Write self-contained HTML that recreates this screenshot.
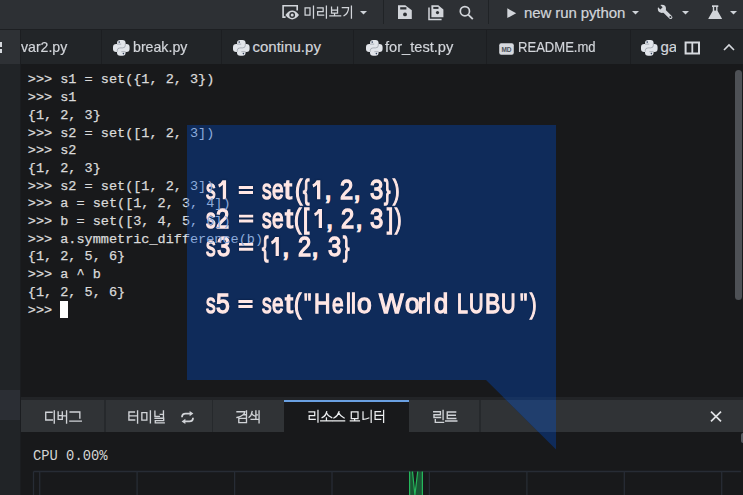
<!DOCTYPE html><html><head><meta charset="utf-8"><style>html,body{margin:0;padding:0;}body{width:743px;height:495px;overflow:hidden;position:relative;background:#18191b;font-family:"Liberation Sans",sans-serif}.big div{position:absolute;white-space:pre;transform-origin:0 0}</style></head><body><div style="position:absolute;left:0;top:0;width:743px;height:29px;background:#2d3034"></div>
<div style="position:absolute;left:0;top:29px;width:743px;height:1px;background:#1d1f22"></div>
<svg style="position:absolute;left:281px;top:4px" width="20" height="17" viewBox="0 0 20 17"><path d="M4.6 13.1H2.1V1.8H16.2V6.6" fill="none" stroke="#d2d5da" stroke-width="1.6"/><path d="M4.4 11Q11.2 2.2 18 11Q11.2 19.8 4.4 11Z" fill="#d2d5da"/><circle cx="11.2" cy="11" r="2.9" fill="#2d3034"/><circle cx="11.2" cy="11" r="1.5" fill="#d2d5da"/></svg>
<svg style="position:absolute;left:0;top:0" width="743" height="30"><g fill="none" stroke="#d2d5da" stroke-width="1.25" stroke-linecap="square" stroke-linejoin="miter"><path transform="translate(304.00 6.60) scale(0.1200)" d="M9 11H50V72H9Z M79 -3V95" vector-effect="non-scaling-stroke"/><path transform="translate(316.45 6.60) scale(0.1200)" d="M8 10H56V41H10V72H60 M83 -3V95" vector-effect="non-scaling-stroke"/><path transform="translate(328.90 6.60) scale(0.1200)" d="M22 5V54H72V5 M22 29H72 M47 54V76 M8 78H98" vector-effect="non-scaling-stroke"/><path transform="translate(341.35 6.60) scale(0.1200)" d="M8 9H60Q60 52 22 76 M84 -3V95" vector-effect="non-scaling-stroke"/></g></svg>
<svg style="position:absolute;left:360px;top:11px" width="7" height="3.6" viewBox="0 0 7 3.6"><path d="M0 0H7L3.5 3.6Z" fill="#cfd3d8"/></svg>
<div style="position:absolute;left:383px;top:0;width:1px;height:24px;background:#202326"></div>
<svg style="position:absolute;left:397px;top:5px" width="16" height="15" viewBox="0 0 16 15"><path d="M1 0.3H8.3L14.8 5.2V14H1Z" fill="#d2d5da"/><rect x="3.2" y="2.2" width="6.2" height="2.3" fill="#2d3034"/><circle cx="8" cy="9.4" r="1.9" fill="#2d3034"/></svg>
<svg style="position:absolute;left:428px;top:5px" width="17" height="16" viewBox="0 0 17 16"><path d="M1 2.6V14.4H13.6" fill="none" stroke="#d2d5da" stroke-width="1.5"/><path d="M3.4 0.3H10.3L15.4 4.4V12.2H3.4Z" fill="#d2d5da"/><rect x="5.3" y="1.9" width="5.2" height="2" fill="#2d3034"/><circle cx="9.5" cy="7.6" r="1.6" fill="#2d3034"/></svg>
<svg style="position:absolute;left:458px;top:5px" width="17" height="15" viewBox="0 0 17 15"><circle cx="6.9" cy="6.2" r="4.6" fill="none" stroke="#d2d5da" stroke-width="1.7"/><path d="M10.2 9.6L14.8 14.1" stroke="#d2d5da" stroke-width="1.9"/></svg>
<div style="position:absolute;left:488px;top:0;width:1px;height:24px;background:#202326"></div>
<svg style="position:absolute;left:507px;top:7.5px" width="10" height="11" viewBox="0 0 10 11"><path d="M0.3 0.3L9.2 5.2L0.3 10.1Z" fill="#d2d5da"/></svg>
<div style="position:absolute;left:524px;top:2px;font:15px/22px 'Liberation Sans',sans-serif;color:#d2d5da;-webkit-text-stroke:0.2px #d2d5da;white-space:nowrap;letter-spacing:-0.1px">new run python</div>
<svg style="position:absolute;left:632px;top:11px" width="7" height="3.6" viewBox="0 0 7 3.6"><path d="M0 0H7L3.5 3.6Z" fill="#cfd3d8"/></svg>
<svg style="position:absolute;left:656px;top:3px" width="18" height="18" viewBox="0 0 18 18"><circle cx="5.9" cy="5.8" r="4.1" fill="#d2d5da"/><path d="M5.9 5.8L14.6 14.2" stroke="#d2d5da" stroke-width="3.6" stroke-linecap="round"/><path d="M6.6 4.3L2.8 0.5L0.6 2.7L4.4 6.5Z" fill="#2d3034"/><circle cx="14.4" cy="14" r="1.05" fill="#2d3034"/></svg>
<svg style="position:absolute;left:681.5px;top:11px" width="7" height="3.6" viewBox="0 0 7 3.6"><path d="M0 0H7L3.5 3.6Z" fill="#cfd3d8"/></svg>
<svg style="position:absolute;left:707px;top:4px" width="16" height="16" viewBox="0 0 16 16"><rect x="5" y="1.3" width="6.3" height="1.7" fill="#d2d5da"/><path d="M5.8 2.9H10.5V6.8L14.9 14.4Q15.2 15 14.5 15H1.8Q1.1 15 1.4 14.4L5.8 6.8Z" fill="#d2d5da"/><path d="M7.2 2.9H9.1V6.6H7.2Z" fill="#2d3034"/></svg>
<svg style="position:absolute;left:730px;top:11px" width="7" height="3.6" viewBox="0 0 7 3.6"><path d="M0 0H7L3.5 3.6Z" fill="#cfd3d8"/></svg>
<div style="position:absolute;left:0;top:30px;width:743px;height:34px;background:#222528"></div>
<div style="position:absolute;left:0;top:30px;width:20px;height:34px;background:#2e3135"></div>
<div style="position:absolute;left:0;top:42px;width:2px;height:5.2px;background:#d6d9de"></div>
<div style="position:absolute;left:0;top:49px;width:1.8px;height:3.7px;background:#d6d9de"></div>
<div style="position:absolute;left:20px;top:30px;width:1px;height:34px;background:#1c1e21"></div>
<div style="position:absolute;left:101px;top:30px;width:1px;height:34px;background:#1c1e21"></div>
<div style="position:absolute;left:221px;top:30px;width:1px;height:34px;background:#1c1e21"></div>
<div style="position:absolute;left:353px;top:30px;width:1px;height:34px;background:#1c1e21"></div>
<div style="position:absolute;left:486px;top:30px;width:1px;height:34px;background:#1c1e21"></div>
<div style="position:absolute;left:630px;top:30px;width:1px;height:34px;background:#1c1e21"></div>
<div style="position:absolute;left:21.3px;top:36px;font:15px/22px 'Liberation Sans',sans-serif;color:#d2d5da;-webkit-text-stroke:0.2px #d2d5da;white-space:nowrap;letter-spacing:0px;transform-origin:0 0;transform:scaleX(0.94)">var2.py</div>
<svg width="17" height="17" viewBox="0 0 17 17" style="position:absolute;left:113px;top:39.5px"><rect x="4" y="0" width="8.6" height="15.8" rx="3.2" fill="#e2e5ea"/><rect x="0" y="3.9" width="16.6" height="8" rx="3.2" fill="#e2e5ea"/><path d="M4.3 11.8V10.4Q4.3 7.9 7 7.9H9.6Q12.3 7.9 12.3 5.4V3.9M4 4.1H8.2M8.4 11.7H12.6" fill="none" stroke="#7d848e" stroke-width="0.55"/><circle cx="6.2" cy="2.1" r="0.8" fill="#34445e"/><circle cx="10.4" cy="13.6" r="0.8" fill="#34445e"/></svg>
<div style="position:absolute;left:133px;top:36px;font:15px/22px 'Liberation Sans',sans-serif;color:#d2d5da;-webkit-text-stroke:0.2px #d2d5da;white-space:nowrap;letter-spacing:0px;transform-origin:0 0;transform:scaleX(0.945)">break.py</div>
<svg width="17" height="17" viewBox="0 0 17 17" style="position:absolute;left:232.5px;top:39.5px"><rect x="4" y="0" width="8.6" height="15.8" rx="3.2" fill="#e2e5ea"/><rect x="0" y="3.9" width="16.6" height="8" rx="3.2" fill="#e2e5ea"/><path d="M4.3 11.8V10.4Q4.3 7.9 7 7.9H9.6Q12.3 7.9 12.3 5.4V3.9M4 4.1H8.2M8.4 11.7H12.6" fill="none" stroke="#7d848e" stroke-width="0.55"/><circle cx="6.2" cy="2.1" r="0.8" fill="#34445e"/><circle cx="10.4" cy="13.6" r="0.8" fill="#34445e"/></svg>
<div style="position:absolute;left:252.5px;top:36px;font:15px/22px 'Liberation Sans',sans-serif;color:#d2d5da;-webkit-text-stroke:0.2px #d2d5da;white-space:nowrap;letter-spacing:0px;transform-origin:0 0;transform:scaleX(1.0)">continu.py</div>
<svg width="17" height="17" viewBox="0 0 17 17" style="position:absolute;left:365.5px;top:39.5px"><rect x="4" y="0" width="8.6" height="15.8" rx="3.2" fill="#e2e5ea"/><rect x="0" y="3.9" width="16.6" height="8" rx="3.2" fill="#e2e5ea"/><path d="M4.3 11.8V10.4Q4.3 7.9 7 7.9H9.6Q12.3 7.9 12.3 5.4V3.9M4 4.1H8.2M8.4 11.7H12.6" fill="none" stroke="#7d848e" stroke-width="0.55"/><circle cx="6.2" cy="2.1" r="0.8" fill="#34445e"/><circle cx="10.4" cy="13.6" r="0.8" fill="#34445e"/></svg>
<div style="position:absolute;left:385px;top:36px;font:15px/22px 'Liberation Sans',sans-serif;color:#d2d5da;-webkit-text-stroke:0.2px #d2d5da;white-space:nowrap;letter-spacing:0px;transform-origin:0 0;transform:scaleX(0.975)">for_test.py</div>
<svg style="position:absolute;left:499px;top:42.5px" width="15" height="12" viewBox="0 0 15 12"><rect x="0.2" y="0.2" width="14.6" height="11.6" rx="2" fill="#d6d9de"/><text x="7.5" y="8.6" font-family="Liberation Sans" font-size="6.5" font-weight="bold" text-anchor="middle" fill="#4a5058">MD</text></svg>
<div style="position:absolute;left:518px;top:36px;font:15px/22px 'Liberation Sans',sans-serif;color:#d2d5da;-webkit-text-stroke:0.2px #d2d5da;white-space:nowrap;letter-spacing:0px;transform-origin:0 0;transform:scaleX(0.87)">README.md</div>
<svg width="17" height="17" viewBox="0 0 17 17" style="position:absolute;left:641px;top:39.5px"><rect x="4" y="0" width="8.6" height="15.8" rx="3.2" fill="#e2e5ea"/><rect x="0" y="3.9" width="16.6" height="8" rx="3.2" fill="#e2e5ea"/><path d="M4.3 11.8V10.4Q4.3 7.9 7 7.9H9.6Q12.3 7.9 12.3 5.4V3.9M4 4.1H8.2M8.4 11.7H12.6" fill="none" stroke="#7d848e" stroke-width="0.55"/><circle cx="6.2" cy="2.1" r="0.8" fill="#34445e"/><circle cx="10.4" cy="13.6" r="0.8" fill="#34445e"/></svg>
<div style="position:absolute;left:660.5px;top:36px;font:15px/22px 'Liberation Sans',sans-serif;color:#d2d5da;-webkit-text-stroke:0.2px #d2d5da;white-space:nowrap;letter-spacing:0px;transform-origin:0 0;transform:scaleX(1.0)">ga</div>
<div style="position:absolute;left:676px;top:30px;width:67px;height:33px;background:#222528"></div>
<svg style="position:absolute;left:684px;top:40.5px" width="17" height="14" viewBox="0 0 17 14"><rect x="1.6" y="1.5" width="13.4" height="11" fill="none" stroke="#d6d9de" stroke-width="2"/><path d="M8.3 1.5V12.5" stroke="#d6d9de" stroke-width="1.8"/></svg>
<svg style="position:absolute;left:723px;top:43px" width="12" height="8" viewBox="0 0 12 8"><path d="M1 7L6 2L11 7" fill="none" stroke="#d6d9de" stroke-width="1.6"/></svg>
<div style="position:absolute;left:0;top:64px;width:20px;height:431px;background:#212427"></div>
<div style="position:absolute;left:0;top:390px;width:20px;height:30px;background:#2b2e34"></div>
<div style="position:absolute;left:20px;top:64px;width:1px;height:431px;background:#1b1d20"></div>
<div style="position:absolute;left:21px;top:64px;width:722px;height:333px;background:#18191b"></div>
<div style="position:absolute;left:27.8px;top:71.40px;height:18px;font:13.53px/18px 'Liberation Mono',monospace;color:#dadada;-webkit-text-stroke:0.25px currentColor;white-space:pre">&gt;&gt;&gt; s1 = set({1, 2, 3})</div><div style="position:absolute;left:27.8px;top:89.10px;height:18px;font:13.53px/18px 'Liberation Mono',monospace;color:#dadada;-webkit-text-stroke:0.25px currentColor;white-space:pre">&gt;&gt;&gt; s1</div><div style="position:absolute;left:27.8px;top:106.80px;height:18px;font:13.53px/18px 'Liberation Mono',monospace;color:#dadada;-webkit-text-stroke:0.25px currentColor;white-space:pre">{1, 2, 3}</div><div style="position:absolute;left:27.8px;top:124.50px;height:18px;font:13.53px/18px 'Liberation Mono',monospace;color:#dadada;-webkit-text-stroke:0.25px currentColor;white-space:pre">&gt;&gt;&gt; s2 = set([1, 2, 3])</div><div style="position:absolute;left:27.8px;top:142.20px;height:18px;font:13.53px/18px 'Liberation Mono',monospace;color:#dadada;-webkit-text-stroke:0.25px currentColor;white-space:pre">&gt;&gt;&gt; s2</div><div style="position:absolute;left:27.8px;top:159.90px;height:18px;font:13.53px/18px 'Liberation Mono',monospace;color:#dadada;-webkit-text-stroke:0.25px currentColor;white-space:pre">{1, 2, 3}</div><div style="position:absolute;left:27.8px;top:177.60px;height:18px;font:13.53px/18px 'Liberation Mono',monospace;color:#dadada;-webkit-text-stroke:0.25px currentColor;white-space:pre">&gt;&gt;&gt; s2 = set([1, 2, 3])</div><div style="position:absolute;left:27.8px;top:195.30px;height:18px;font:13.53px/18px 'Liberation Mono',monospace;color:#dadada;-webkit-text-stroke:0.25px currentColor;white-space:pre">&gt;&gt;&gt; a = set([1, 2, 3, 4])</div><div style="position:absolute;left:27.8px;top:213.00px;height:18px;font:13.53px/18px 'Liberation Mono',monospace;color:#dadada;-webkit-text-stroke:0.25px currentColor;white-space:pre">&gt;&gt;&gt; b = set([3, 4, 5, 6])</div><div style="position:absolute;left:27.8px;top:230.70px;height:18px;font:13.53px/18px 'Liberation Mono',monospace;color:#dadada;-webkit-text-stroke:0.25px currentColor;white-space:pre">&gt;&gt;&gt; a.symmetric_difference(b)</div><div style="position:absolute;left:27.8px;top:248.40px;height:18px;font:13.53px/18px 'Liberation Mono',monospace;color:#dadada;-webkit-text-stroke:0.25px currentColor;white-space:pre">{1, 2, 5, 6}</div><div style="position:absolute;left:27.8px;top:266.10px;height:18px;font:13.53px/18px 'Liberation Mono',monospace;color:#dadada;-webkit-text-stroke:0.25px currentColor;white-space:pre">&gt;&gt;&gt; a ^ b</div><div style="position:absolute;left:27.8px;top:283.80px;height:18px;font:13.53px/18px 'Liberation Mono',monospace;color:#dadada;-webkit-text-stroke:0.25px currentColor;white-space:pre">{1, 2, 5, 6}</div><div style="position:absolute;left:27.8px;top:301.50px;height:18px;font:13.53px/18px 'Liberation Mono',monospace;color:#dadada;-webkit-text-stroke:0.25px currentColor;white-space:pre">&gt;&gt;&gt; </div>
<div style="position:absolute;left:60px;top:301px;width:8px;height:17px;background:#ffffff"></div>
<div style="position:absolute;left:735px;top:70px;width:7px;height:229.5px;border-radius:3.5px;background:#4e5156"></div>
<div style="position:absolute;left:21px;top:397px;width:722px;height:3px;background:#222427"></div>
<div style="position:absolute;left:21px;top:400px;width:722px;height:32px;background:#303336"></div>
<div style="position:absolute;left:104px;top:400px;width:1.5px;height:32px;background:#26292c"></div>
<div style="position:absolute;left:211.6px;top:400px;width:1.5px;height:32px;background:#26292c"></div>
<div style="position:absolute;left:479.3px;top:400px;width:1.5px;height:32px;background:#26292c"></div>
<div style="position:absolute;left:284px;top:400px;width:125.3px;height:32px;background:#18191b"></div>
<div style="position:absolute;left:284px;top:400px;width:125.3px;height:2px;background:#6aa0e2"></div>
<svg style="position:absolute;left:0;top:0" width="743" height="495"><g fill="none" stroke="#d0d3d7" stroke-width="1.35" stroke-linecap="square" stroke-linejoin="miter"><path transform="translate(45.00 411.30) scale(0.1220)" d="M58 8H6V71H60 M76 -3V96" vector-effect="non-scaling-stroke"/><path transform="translate(57.30 411.30) scale(0.1220)" d="M7 6V66H41V6 M7 36H41 M76 -3V96 M45 38H76" vector-effect="non-scaling-stroke"/><path transform="translate(69.60 411.30) scale(0.1220)" d="M4 6H84V56 M2 80H96" vector-effect="non-scaling-stroke"/></g><g fill="none" stroke="#d0d3d7" stroke-width="1.35" stroke-linecap="square" stroke-linejoin="miter"><path transform="translate(128.30 411.30) scale(0.1220)" d="M50 6H5V71H52 M5 38H48 M76 -3V96 M52 38H76" vector-effect="non-scaling-stroke"/><path transform="translate(140.75 411.30) scale(0.1220)" d="M9 11H50V72H9Z M79 -3V95" vector-effect="non-scaling-stroke"/><path transform="translate(153.20 411.30) scale(0.1220)" d="M14 0V42H50 M84 -3V57 M58 25H84 M15 57H86V76H17V95H90" vector-effect="non-scaling-stroke"/></g><g fill="none" stroke="#d0d3d7" stroke-width="1.35" stroke-linecap="square" stroke-linejoin="miter"><path transform="translate(236.00 411.30) scale(0.1220)" d="M8 4H72Q70 36 8 51 M86 -3V59 M68 28H86 M23 58H86V93H23Z" vector-effect="non-scaling-stroke"/><path transform="translate(248.45 411.30) scale(0.1220)" d="M30 2Q24 36 5 49 M30 24Q38 36 50 38 M61 -3V61 M61 29H73 M87 -3V61 M22 66H87V94" vector-effect="non-scaling-stroke"/></g><g fill="none" stroke="#eceef0" stroke-width="1.25" stroke-linecap="square" stroke-linejoin="miter"><path transform="translate(308.00 410.80) scale(0.1200)" d="M8 10H56V41H10V72H60 M83 -3V95" vector-effect="non-scaling-stroke"/><path transform="translate(320.20 410.80) scale(0.1200)" d="M54 8Q46 44 16 57 M54 20Q64 44 96 57 M52 60V78 M4 85H100" vector-effect="non-scaling-stroke"/><path transform="translate(332.40 410.80) scale(0.1200)" d="M55 8Q45 44 12 60 M55 20Q65 44 98 60 M6 85H102" vector-effect="non-scaling-stroke"/><path transform="translate(350.09 410.80) scale(0.1200)" d="M10 8H66V66H10Z M38 66V82 M2 84H78" vector-effect="non-scaling-stroke"/><path transform="translate(362.29 410.80) scale(0.1200)" d="M6 8V72Q30 70 54 60 M74 -3V96" vector-effect="non-scaling-stroke"/><path transform="translate(374.49 410.80) scale(0.1200)" d="M50 6H5V71H52 M5 38H48 M76 -3V96 M52 38H76" vector-effect="non-scaling-stroke"/></g><g fill="none" stroke="#d0d3d7" stroke-width="1.35" stroke-linecap="square" stroke-linejoin="miter"><path transform="translate(433.00 410.80) scale(0.1200)" d="M6 8H62V33H8V56H63 M84 -3V73 M19 73V97H88" vector-effect="non-scaling-stroke"/><path transform="translate(445.20 410.80) scale(0.1200)" d="M87 10H17V64H88 M17 37H84 M4 85H97" vector-effect="non-scaling-stroke"/></g></svg>
<svg style="position:absolute;left:180px;top:411px" width="15" height="13" viewBox="0 0 15 13"><path d="M2 6.2Q2 2.6 5.6 2.6H10.8" fill="none" stroke="#d0d3d7" stroke-width="1.8"/><path d="M9.6 0L13.4 2.6L9.6 5.2Z" fill="#d0d3d7"/><path d="M13 6.8Q13 10.4 9.4 10.4H4.2" fill="none" stroke="#d0d3d7" stroke-width="1.8"/><path d="M5.4 7.8L1.6 10.4L5.4 13Z" fill="#d0d3d7"/></svg>
<svg style="position:absolute;left:709.5px;top:410.5px" width="12" height="11" viewBox="0 0 12 11"><path d="M1 0.6L11 10.4M11 0.6L1 10.4" stroke="#e0e2e5" stroke-width="1.7"/></svg>
<div style="position:absolute;left:21px;top:432px;width:722px;height:63px;background:#18191b"></div>
<div style="position:absolute;left:33px;top:448px;font:13.8px/18px 'Liberation Mono',monospace;color:#d4d4d4;white-space:pre">CPU 0.00%</div>
<div style="position:absolute;left:741px;top:433px;width:4px;height:10px;border-radius:2px;background:#555a60"></div>
<svg style="position:absolute;left:0;top:0" width="743" height="495"><path d="M33.5 471.5H741" stroke="#272c35" stroke-width="1.3"/><path d="M33.5 471.5V495" stroke="#272c35" stroke-width="1.3"/><path d="M39.7 471.5V495" stroke="#272c35" stroke-width="1.3"/><path d="M137.1 471.5V495" stroke="#272c35" stroke-width="1.3"/><path d="M234.6 471.5V495" stroke="#272c35" stroke-width="1.3"/><path d="M332.0 471.5V495" stroke="#272c35" stroke-width="1.3"/><path d="M429.4 471.5V495" stroke="#272c35" stroke-width="1.3"/><path d="M526.9 471.5V495" stroke="#272c35" stroke-width="1.3"/><path d="M624.3 471.5V495" stroke="#272c35" stroke-width="1.3"/><path d="M721.7 471.5V495" stroke="#272c35" stroke-width="1.3"/><path d="M409.5 495V471.5H412.5L414.9 495L417.7 471.5H422.4V495Z" fill="#1b5534"/><path d="M409.6 471.5V495M412.5 471.5L414.9 495L417.7 471.5M422.4 471.5V495" stroke="#25b75c" stroke-width="1.2" fill="none"/></svg>
<div style="position:absolute;left:0;top:0;width:743px;height:495px;clip-path:polygon(187px 125px, 556px 125px, 556px 449.5px, 486px 380px, 187px 380px);background:#0f2b5a"></div>
<div style="position:absolute;left:0;top:0;width:743px;height:495px;clip-path:polygon(187px 125px, 556px 125px, 556px 449.5px, 486px 380px, 187px 380px)"><div style="position:absolute;left:21px;top:397px;width:722px;height:3px;background:#16325f"></div><div style="position:absolute;left:21px;top:400px;width:722px;height:32px;background:#203e6d"></div></div>
<svg style="position:absolute;left:0;top:0" width="743" height="495"><path fill="#ffe7e5" style="filter:drop-shadow(0 0 1.2px #061838)" d="M222.50 180.20H226.10V199.20H222.80V184.80Q221.40 186.40 219.10 187.60L218.20 184.60Q220.80 183.40 222.50 180.20Z M238.80 186.00H253.00V188.90H238.80Z M238.80 190.90H253.00V193.90H238.80Z M316.70 180.20H320.30V199.20H317.00V184.80Q315.60 186.40 313.30 187.60L312.40 184.60Q315.00 183.40 316.70 180.20Z M239.00 214.70H253.20V217.60H239.00Z M239.00 219.60H253.20V222.60H239.00Z M318.40 208.90H322.00V227.90H318.70V213.50Q317.30 215.10 315.00 216.30L314.10 213.30Q316.70 212.10 318.40 208.90Z M239.00 242.90H253.20V245.80H239.00Z M239.00 247.80H253.20V250.80H239.00Z M275.30 237.10H278.90V256.10H275.60V241.70Q274.20 243.30 271.90 244.50L271.00 241.50Q273.60 240.30 275.30 237.10Z M238.40 300.10H252.60V303.00H238.40Z M238.40 305.00H252.60V308.00H238.40Z"/></svg>
<div style="position:absolute;left:0;top:0;font:27.5px/31.62px 'Liberation Sans',sans-serif;color:#ffe7e5;-webkit-text-stroke:1.3px #ffe7e5;text-shadow:0 0 1.5px #061838" class="big"><div style="left:206.09px;top:173.86px;transform:scaleX(0.700)">s</div><div style="left:261.79px;top:173.86px;transform:scaleX(0.700)">s</div><div style="left:272.14px;top:173.86px;transform:scaleX(0.760)">e</div><div style="left:284.43px;top:173.86px;transform:scaleX(1.043)">t</div><div style="left:294.60px;top:173.86px;transform:scaleX(0.795)">(</div><div style="left:303.20px;top:173.86px;transform:scaleX(0.700)">{</div><div style="left:324.15px;top:173.86px;transform:scaleX(1.000)">,</div><div style="left:340.04px;top:173.86px;transform:scaleX(0.864)">2</div><div style="left:353.35px;top:173.86px;transform:scaleX(1.000)">,</div><div style="left:369.59px;top:173.86px;transform:scaleX(0.869)">3</div><div style="left:384.30px;top:173.86px;transform:scaleX(0.700)">}</div><div style="left:392.61px;top:173.86px;transform:scaleX(0.712)">)</div><div style="left:206.09px;top:202.56px;transform:scaleX(0.700)">s</div><div style="left:216.24px;top:202.56px;transform:scaleX(0.864)">2</div><div style="left:261.59px;top:202.56px;transform:scaleX(0.700)">s</div><div style="left:272.14px;top:202.56px;transform:scaleX(0.760)">e</div><div style="left:284.53px;top:202.56px;transform:scaleX(1.043)">t</div><div style="left:294.30px;top:202.56px;transform:scaleX(0.795)">(</div><div style="left:303.02px;top:202.56px;transform:scaleX(0.815)">[</div><div style="left:325.65px;top:202.56px;transform:scaleX(1.000)">,</div><div style="left:341.44px;top:202.56px;transform:scaleX(0.864)">2</div><div style="left:355.15px;top:202.56px;transform:scaleX(1.000)">,</div><div style="left:370.49px;top:202.56px;transform:scaleX(0.869)">3</div><div style="left:387.39px;top:202.56px;transform:scaleX(0.800)">]</div><div style="left:394.71px;top:202.56px;transform:scaleX(0.712)">)</div><div style="left:206.09px;top:230.76px;transform:scaleX(0.700)">s</div><div style="left:217.19px;top:230.76px;transform:scaleX(0.869)">3</div><div style="left:261.70px;top:230.76px;transform:scaleX(0.700)">{</div><div style="left:281.95px;top:230.76px;transform:scaleX(1.000)">,</div><div style="left:297.94px;top:230.76px;transform:scaleX(0.864)">2</div><div style="left:311.35px;top:230.76px;transform:scaleX(1.000)">,</div><div style="left:327.59px;top:230.76px;transform:scaleX(0.869)">3</div><div style="left:342.90px;top:230.76px;transform:scaleX(0.700)">}</div><div style="left:205.99px;top:287.96px;transform:scaleX(0.700)">s</div><div style="left:216.36px;top:287.96px;transform:scaleX(0.900)">5</div><div style="left:261.59px;top:287.96px;transform:scaleX(0.700)">s</div><div style="left:272.14px;top:287.96px;transform:scaleX(0.760)">e</div><div style="left:284.73px;top:287.96px;transform:scaleX(1.043)">t</div><div style="left:294.30px;top:287.96px;transform:scaleX(0.795)">(</div><div style="left:304.06px;top:287.96px;transform:scaleX(0.743)">&quot;</div><div style="left:313.74px;top:287.96px;transform:scaleX(0.830)">H</div><div style="left:332.04px;top:287.96px;transform:scaleX(0.760)">e</div><div style="left:346.05px;top:287.96px;transform:scaleX(0.792)">l</div><div style="left:351.25px;top:287.96px;transform:scaleX(0.792)">l</div><div style="left:356.90px;top:287.96px;transform:scaleX(0.961)">o</div><div style="left:379.36px;top:287.96px;transform:scaleX(0.949)">W</div><div style="left:404.60px;top:287.96px;transform:scaleX(0.961)">o</div><div style="left:417.64px;top:287.96px;transform:scaleX(0.783)">r</div><div style="left:426.05px;top:287.96px;transform:scaleX(0.792)">l</div><div style="left:433.74px;top:287.96px;transform:scaleX(0.927)">d</div><div style="left:456.72px;top:287.96px;transform:scaleX(0.711)">L</div><div style="left:468.82px;top:287.96px;transform:scaleX(0.731)">U</div><div style="left:484.63px;top:287.96px;transform:scaleX(0.836)">B</div><div style="left:500.62px;top:287.96px;transform:scaleX(0.731)">U</div><div style="left:519.56px;top:287.96px;transform:scaleX(0.743)">&quot;</div><div style="left:529.51px;top:287.96px;transform:scaleX(0.712)">)</div></div>
<div style="position:absolute;left:0;top:0;width:743px;height:495px;clip-path:polygon(187px 125px, 556px 125px, 556px 449.5px, 486px 380px, 187px 380px)"><div style="position:absolute;left:27.8px;top:71.40px;height:18px;font:13.53px/18px 'Liberation Mono',monospace;color:#8dabdc;white-space:pre">&gt;&gt;&gt; s1 = set({1, 2, 3})</div><div style="position:absolute;left:27.8px;top:89.10px;height:18px;font:13.53px/18px 'Liberation Mono',monospace;color:#8dabdc;white-space:pre">&gt;&gt;&gt; s1</div><div style="position:absolute;left:27.8px;top:106.80px;height:18px;font:13.53px/18px 'Liberation Mono',monospace;color:#8dabdc;white-space:pre">{1, 2, 3}</div><div style="position:absolute;left:27.8px;top:124.50px;height:18px;font:13.53px/18px 'Liberation Mono',monospace;color:#8dabdc;white-space:pre">&gt;&gt;&gt; s2 = set([1, 2, 3])</div><div style="position:absolute;left:27.8px;top:142.20px;height:18px;font:13.53px/18px 'Liberation Mono',monospace;color:#8dabdc;white-space:pre">&gt;&gt;&gt; s2</div><div style="position:absolute;left:27.8px;top:159.90px;height:18px;font:13.53px/18px 'Liberation Mono',monospace;color:#8dabdc;white-space:pre">{1, 2, 3}</div><div style="position:absolute;left:27.8px;top:177.60px;height:18px;font:13.53px/18px 'Liberation Mono',monospace;color:#8dabdc;white-space:pre">&gt;&gt;&gt; s2 = set([1, 2, 3])</div><div style="position:absolute;left:27.8px;top:195.30px;height:18px;font:13.53px/18px 'Liberation Mono',monospace;color:#8dabdc;white-space:pre">&gt;&gt;&gt; a = set([1, 2, 3, 4])</div><div style="position:absolute;left:27.8px;top:213.00px;height:18px;font:13.53px/18px 'Liberation Mono',monospace;color:#8dabdc;white-space:pre">&gt;&gt;&gt; b = set([3, 4, 5, 6])</div><div style="position:absolute;left:27.8px;top:230.70px;height:18px;font:13.53px/18px 'Liberation Mono',monospace;color:#8dabdc;white-space:pre">&gt;&gt;&gt; a.symmetric_difference(b)</div><div style="position:absolute;left:27.8px;top:248.40px;height:18px;font:13.53px/18px 'Liberation Mono',monospace;color:#8dabdc;white-space:pre">{1, 2, 5, 6}</div><div style="position:absolute;left:27.8px;top:266.10px;height:18px;font:13.53px/18px 'Liberation Mono',monospace;color:#8dabdc;white-space:pre">&gt;&gt;&gt; a ^ b</div><div style="position:absolute;left:27.8px;top:283.80px;height:18px;font:13.53px/18px 'Liberation Mono',monospace;color:#8dabdc;white-space:pre">{1, 2, 5, 6}</div><div style="position:absolute;left:27.8px;top:301.50px;height:18px;font:13.53px/18px 'Liberation Mono',monospace;color:#8dabdc;white-space:pre">&gt;&gt;&gt; </div></div></body></html>
